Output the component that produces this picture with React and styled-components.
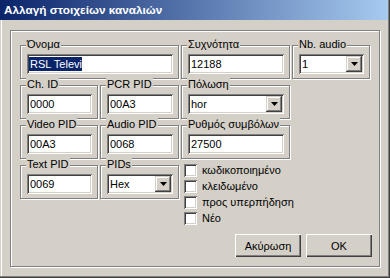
import React from "react";
import styled, { createGlobalStyle } from "styled-components";

const GlobalStyle = createGlobalStyle`
  html, body {
    margin: 0;
    padding: 0;
    background: #d4d0c8;
  }
  body {
    font-family: "Liberation Sans", Arial, sans-serif;
    font-size: 11px;
    color: #000;
  }
`;

function App() {
    return (
        <>
            <GlobalStyle />
            <Window>
                <TitleBar>Αλλαγή στοιχείων καναλιών</TitleBar>
                <Panel>
                    <Form>
                        <Group $area="name">
                            <Legend>Όνομα</Legend>
                            <Field><Selected>RSL Televi</Selected></Field>
                        </Group>
                        <Group $area="freq">
                            <Legend>Συχνότητα</Legend>
                            <Field>12188</Field>
                        </Group>
                        <Group $area="audio">
                            <Legend>Nb. audio</Legend>
                            <Combo value="1" />
                        </Group>

                        <Group $area="chid">
                            <Legend>Ch. ID</Legend>
                            <Field>0000</Field>
                        </Group>
                        <Group $area="pcr">
                            <Legend>PCR PID</Legend>
                            <Field>00A3</Field>
                        </Group>
                        <Group $area="pol">
                            <Legend>Πόλωση</Legend>
                            <Combo value="hor" />
                        </Group>

                        <Group $area="vpid">
                            <Legend>Video PID</Legend>
                            <Field>00A3</Field>
                        </Group>
                        <Group $area="apid">
                            <Legend>Audio PID</Legend>
                            <Field>0068</Field>
                        </Group>
                        <Group $area="sr">
                            <Legend>Ρυθμός συμβόλων</Legend>
                            <Field>27500</Field>
                        </Group>

                        <Group $area="tpid">
                            <Legend>Text PID</Legend>
                            <Field>0069</Field>
                        </Group>
                        <Group $area="pids">
                            <Legend>PIDs</Legend>
                            <Combo value="Hex" />
                        </Group>

                        <Checks>
                            <Check label="κωδικοποιημένο" />
                            <Check label="κλειδωμένο" />
                            <Check label="προς υπερπήδηση" />
                            <Check label="Νέο" />
                        </Checks>
                    </Form>

                    <ButtonRow>
                        <Button>Ακύρωση</Button>
                        <Button>OK</Button>
                    </ButtonRow>
                </Panel>
            </Window>
        </>
    )
}

function Combo ({value}) {
    return (
        <Field>
            {value}
            <DropButton>
                <svg width="7" height="4" viewBox="0 0 7 4">
                    <polygon points="0,0 7,0 3.5,4" fill="#000" />
                </svg>
            </DropButton>
        </Field>
    )
}

function Check ({label}) {
    return (
        <CheckRow>
            <CheckBox />
            <span>{label}</span>
        </CheckRow>
    )
}


const sunken = `
  box-shadow: inset 1px 1px #808080, inset -1px -1px #fff,
    inset 2px 2px #404040, inset -2px -2px #d4d0c8;
`;

const etched = `
  border: 1px solid #808080;
  box-shadow: inset 1px 1px #fff, 1px 1px #fff;
`;

const Window = styled.div`
  width: 390px;
  height: 278px;
  box-sizing: border-box;
  background: #d4d0c8;
  box-shadow: inset -1px -1px #404040, inset -2px -2px #808080,
    inset 1px 0 #d4d0c8, inset 2px 0 #fff;
  display: flex;
  flex-direction: column;
`;

const TitleBar = styled.div`
  height: 20px;
  margin-right: 2px;
  padding-left: 4px;
  display: flex;
  align-items: center;
  background: linear-gradient(to right, #0a246a, #a6caf0);
  color: #fff;
  font-weight: bold;
  font-size: 11.8px;
`;

const Panel = styled.div`
  ${etched}
  margin: 10px 0 0 10px;
  width: 370px;
  height: 237px;
  box-sizing: border-box;
  padding: 14px 7px 0 9px;
`;

const Form = styled.div`
  display: grid;
  grid-template-columns: 78px 79px 109px 78px;
  grid-template-rows: 34px 34px 34px auto;
  grid-template-areas:
    "name name freq audio"
    "chid pcr pol ."
    "vpid apid sr ."
    "tpid pids chk chk";
  column-gap: 2px;
  row-gap: 6px;
  align-items: start;
`;

const Group = styled.div`
  ${etched}
  grid-area: ${p => p.$area};
  position: relative;
  height: 34px;
  box-sizing: border-box;
  padding: 8px 5px 0 6px;
`;

const Legend = styled.span`
  position: absolute;
  top: -8px;
  left: 5px;
  padding: 0 1px;
  line-height: 13px;
  background: #d4d0c8;
  white-space: nowrap;
`;

const Field = styled.div`
  ${sunken}
  height: 20px;
  box-sizing: border-box;
  padding: 0 2px 0 3px;
  display: flex;
  align-items: center;
  background: #fff;
  white-space: nowrap;
  overflow: hidden;
`;

const Selected = styled.span`
  margin-left: -1px;
  padding: 0 0 0 1px;
  line-height: 14px;
  background: #0a246a;
  color: #fff;
`;

const DropButton = styled.div`
  margin-left: auto;
  width: 16px;
  height: 16px;
  flex-shrink: 0;
  display: flex;
  align-items: center;
  justify-content: center;
  background: #d4d0c8;
  box-shadow: inset -1px -1px #404040, inset 1px 1px #d4d0c8,
    inset -2px -2px #808080, inset 2px 2px #fff;
`;

const Checks = styled.div`
  grid-area: chk;
  margin-top: -3px;
  padding-left: 3px;
  display: flex;
  flex-direction: column;
`;

const CheckRow = styled.div`
  height: 16px;
  display: flex;
  align-items: center;
  gap: 5px;
`;

const CheckBox = styled.div`
  ${sunken}
  width: 13px;
  height: 13px;
  background: #fff;
`;

const ButtonRow = styled.div`
  margin-top: 8px;
  display: flex;
  justify-content: flex-end;
  gap: 5px;
`;

const Button = styled.div`
  width: 66px;
  height: 23px;
  display: flex;
  align-items: center;
  justify-content: center;
  background: #d4d0c8;
  box-shadow: inset 1px 1px #fff, inset -1px -1px #404040,
    inset -2px -2px #808080;
`;


export default App;
